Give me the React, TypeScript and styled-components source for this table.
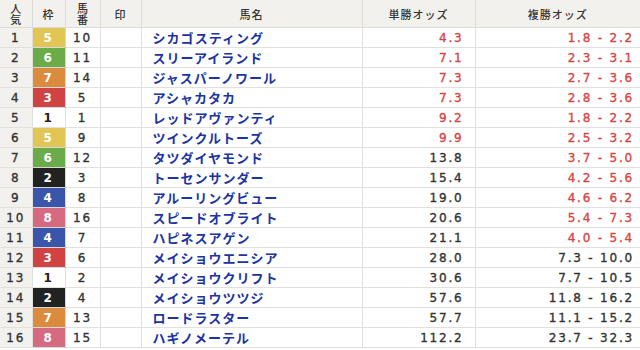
import React from 'react';
import styled, { createGlobalStyle } from 'styled-components';

const GlobalStyle = createGlobalStyle`
  html, body {
    margin: 0;
    padding: 0;
    background: #ffffff;
  }
  body {
    width: 640px;
    height: 350px;
    overflow: hidden;
    font-family: "DejaVu Sans", "Noto Sans CJK JP", sans-serif;
  }
`;

const WAKU: Record<number, { bg: string; fg: string }> = {
  1: { bg: '#ffffff', fg: '#222222' },
  2: { bg: '#222222', fg: '#ffffff' },
  3: { bg: '#d04343', fg: '#ffffff' },
  4: { bg: '#3a56aa', fg: '#ffffff' },
  5: { bg: '#e2c655', fg: '#ffffff' },
  6: { bg: '#6bab4a', fg: '#ffffff' },
  7: { bg: '#db8b3d', fg: '#ffffff' },
  8: { bg: '#d66a80', fg: '#ffffff' },
};

const COLS = [32, 33, 35, 41, 221, 113, 165];

const Table = styled.table`
  width: 640px;
  border-collapse: collapse;
  table-layout: fixed;
  color: #333333;
`;

const Th = styled.th`
  height: 27px;
  padding: 0;
  background: #f2f1ee;
  border: 1px solid #dedcd8;
  border-top: none;
  font-family: "Noto Sans CJK JP", sans-serif;
  font-size: 11px;
  font-weight: 500;
  line-height: 12px;
  letter-spacing: 1px;
  color: #333333;
  text-align: center;
  &:first-child { border-left: none; }
  &:last-child { border-right: none; }
`;

const Stack = styled.span`
  display: inline-block;
  width: 12px;
  line-height: 11px;
  letter-spacing: 0;
  word-break: break-all;
`;

const Row = styled.tr`
  height: 20px;
`;

const Td = styled.td<{ $align?: 'left' | 'center' | 'right'; $pr?: number }>`
  padding: 0 ${(p) => p.$pr ?? 0}px 0 0;
  border: 1px solid #e2e0dc;
  font-size: 12px;
  font-weight: normal;
  -webkit-text-stroke: 0.35px currentColor;
  letter-spacing: 1.8px;
  text-align: ${(p) => p.$align ?? 'center'};
  white-space: nowrap;
  overflow: hidden;
  &:first-child { border-left: none; }
  &:last-child { border-right: none; }
`;

const Rank = styled(Td)`
  background: #f2f1ee;
`;

const Waku = styled(Td)<{ $n: number }>`
  background: ${(p) => WAKU[p.$n].bg};
  color: ${(p) => WAKU[p.$n].fg};
  font-weight: bold;
  -webkit-text-stroke: 0;
  border-color: ${(p) => (p.$n === 1 ? '#e2e0dc' : 'rgba(0,0,0,0.15)')};
`;

const Name = styled(Td)`
  padding-left: 11px;
  font-family: "Noto Sans CJK JP", sans-serif;
  font-size: 13px;
  font-weight: 700;
  -webkit-text-stroke: 0;
  letter-spacing: 1px;
  color: #1b33a3;
`;

const Odds = styled(Td)<{ $hot: boolean }>`
  color: ${(p) => (p.$hot ? '#d64545' : '#333333')};
`;

type Horse = [number, number, string, string, string, boolean, boolean];

const horses: Horse[] = [
  [5, 10, 'シカゴスティング', '4.3', '1.8 - 2.2', true, true],
  [6, 11, 'スリーアイランド', '7.1', '2.3 - 3.1', true, true],
  [7, 14, 'ジャスパーノワール', '7.3', '2.7 - 3.6', true, true],
  [3, 5, 'アシャカタカ', '7.3', '2.8 - 3.6', true, true],
  [1, 1, 'レッドアヴァンティ', '9.2', '1.8 - 2.2', true, true],
  [5, 9, 'ツインクルトーズ', '9.9', '2.5 - 3.2', true, true],
  [6, 12, 'タツダイヤモンド', '13.8', '3.7 - 5.0', false, true],
  [2, 3, 'トーセンサンダー', '15.4', '4.2 - 5.6', false, true],
  [4, 8, 'アルーリングビュー', '19.0', '4.6 - 6.2', false, true],
  [8, 16, 'スピードオブライト', '20.6', '5.4 - 7.3', false, true],
  [4, 7, 'ハピネスアゲン', '21.1', '4.0 - 5.4', false, true],
  [3, 6, 'メイショウエニシア', '28.0', '7.3 - 10.0', false, false],
  [1, 2, 'メイショウクリフト', '30.6', '7.7 - 10.5', false, false],
  [2, 4, 'メイショウツツジ', '57.6', '11.8 - 16.2', false, false],
  [7, 13, 'ロードラスター', '57.7', '11.1 - 15.2', false, false],
  [8, 15, 'ハギノメーテル', '112.2', '23.7 - 32.3', false, false],
];

export default function App() {
  return (
    <>
      <GlobalStyle />
      <Table>
        <colgroup>
          {COLS.map((w, i) => (
            <col key={i} style={{ width: w }} />
          ))}
        </colgroup>
        <thead>
          <tr>
            <Th><Stack>人気</Stack></Th>
            <Th>枠</Th>
            <Th><Stack>馬番</Stack></Th>
            <Th>印</Th>
            <Th>馬名</Th>
            <Th>単勝オッズ</Th>
            <Th>複勝オッズ</Th>
          </tr>
        </thead>
        <tbody>
          {horses.map(([waku, num, name, win, place, winHot, placeHot], i) => (
            <Row key={name}>
              <Rank>{i + 1}</Rank>
              <Waku $n={waku}>{waku}</Waku>
              <Td>{num}</Td>
              <Td />
              <Name $align="left">{name}</Name>
              <Odds $hot={winHot} $align="right" $pr={11}>{win}</Odds>
              <Odds $hot={placeHot} $align="right" $pr={6}>{place}</Odds>
            </Row>
          ))}
        </tbody>
      </Table>
    </>
  );
}
